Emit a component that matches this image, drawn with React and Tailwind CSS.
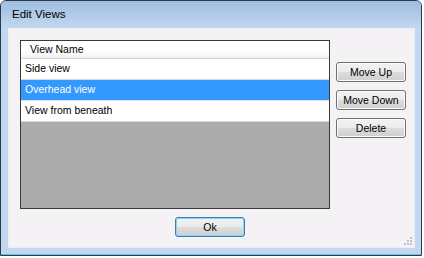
import React from "react";

const views = ["Side view", "Overhead view", "View from beneath"];

const WinButton = ({ label, isDefault = false }) => (
  <button
    className={`h-[20px] w-[70px] rounded-[3px] border text-[10.5px] leading-none text-black bg-[linear-gradient(to_bottom,#f2f2f2_0%,#ebebeb_50%,#dddddd_51%,#cfcfcf_100%)] ${
      isDefault
        ? "border-[#3c7fb1] shadow-[inset_0_0_0_1px_#7fd8f8]"
        : "border-[#707070] shadow-[inset_0_0_0_1px_#fcfcfc]"
    }`}
  >
    {label}
  </button>
);

const App = () => {
  const selected = 1;

  return (
    <div className="w-[424px] h-[258px] bg-white font-['Liberation_Sans',Arial,sans-serif]">
      <div className="w-[422px] h-[256px] flex flex-col border border-[#2e3a48] rounded-t-[6px] bg-[#c3d8f0] overflow-hidden">
        {/* title bar */}
        <div className="h-[27px] shrink-0 flex items-center pl-[11px] bg-[linear-gradient(to_bottom,#9dbde2_0%,#b3cdea_60%,#c3d8f0_100%)]">
          <span className="text-[11.5px] text-black">Edit Views</span>
        </div>

        {/* client area */}
        <div className="relative mx-[6px] ml-[7px] h-[220px] border border-[#e8eef6] bg-[#f5f2f5] pt-[11px] pl-[11px]">
          <div className="flex gap-[6px]">
            <div className="w-[310px] h-[169px] flex flex-col border border-[#3a3a3a] bg-[#ababab]">
              <div className="h-[18px] shrink-0 flex items-center pl-[9px] border-b border-[#d5d5d5] bg-[linear-gradient(to_bottom,#ffffff_0%,#ffffff_50%,#f1f2f4_100%)] text-[10.5px] text-black">
                View Name
              </div>
              {views.map((v, i) => (
                <div
                  key={v}
                  className={`h-[21px] shrink-0 flex items-center pl-[4px] border-b text-[10.5px] ${
                    i === selected
                      ? "bg-[#3399ff] text-white border-[#e0e0e0]"
                      : "bg-white text-black border-[#d8d8d8]"
                  }`}
                >
                  {v}
                </div>
              ))}
            </div>

            <div className="flex flex-col gap-[8px] pt-[22px]">
              <WinButton label="Move Up" />
              <WinButton label="Move Down" />
              <WinButton label="Delete" />
            </div>
          </div>

          <div className="mt-[5px] ml-[155px]">
            <WinButton label="Ok" isDefault />
          </div>

          {/* resize grip */}
          <div className="absolute right-[2px] bottom-[2px] grid grid-cols-3 gap-[1px] w-[8px] h-[8px]">
            {[0, 0, 1, 0, 1, 1, 1, 1, 1].map((on, i) => (
              <span
                key={i}
                className={`w-[2px] h-[2px] ${on ? "bg-[#c2c2c6]" : ""}`}
              />
            ))}
          </div>
        </div>

        <div className="flex-1 flex flex-col justify-end">
          <div className="h-[1px] bg-[#5cc4ea]" />
        </div>
      </div>
    </div>
  );
};

export default App;
